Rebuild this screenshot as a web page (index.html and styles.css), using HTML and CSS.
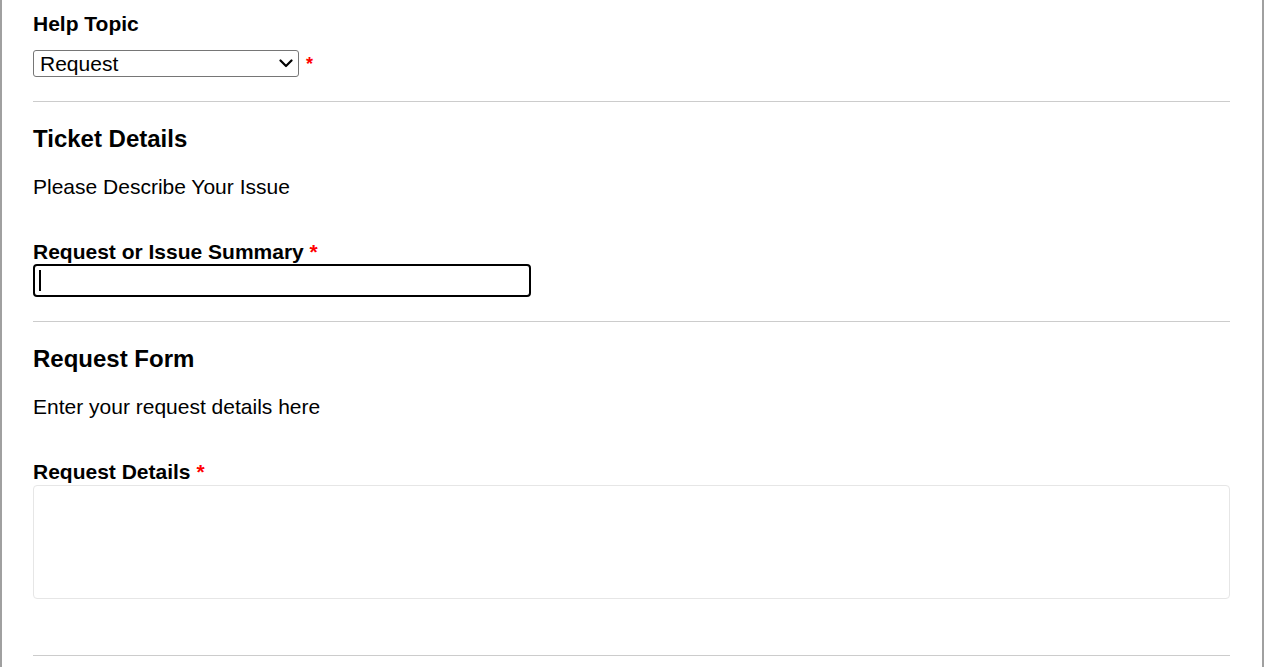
FILE: index.html
```html
<!DOCTYPE html>
<html lang="en">
<head>
<meta charset="utf-8">
<title>Open a New Ticket</title>
<link rel="stylesheet" href="styles.css">
</head>
<body>
<div class="page">
  <div class="field topic">
    <label class="label" for="topic">Help Topic</label>
    <div class="select-row">
      <div class="select-wrap">
        <select id="topic" class="select">
          <option>Request</option>
        </select>
        <svg class="chevron" width="14" height="9" viewBox="0 0 14 9" aria-hidden="true">
          <path d="M1.5 1.5 L7 7 L12.5 1.5" fill="none" stroke="#000" stroke-width="2.2" stroke-linecap="round" stroke-linejoin="round"/>
        </svg>
      </div>
      <span class="req">*</span>
    </div>
  </div>
  <hr class="rule">
  <section class="section">
    <h2 class="heading">Ticket Details</h2>
    <p class="desc">Please Describe Your Issue</p>
    <div class="field">
      <label class="label" for="summary">Request or Issue Summary <span class="req">*</span></label>
      <div class="input-wrap">
        <input id="summary" class="input" type="text">
        <span class="caret"></span>
      </div>
    </div>
  </section>
  <hr class="rule">
  <section class="section">
    <h2 class="heading">Request Form</h2>
    <p class="desc">Enter your request details here</p>
    <div class="field">
      <label class="label" for="details">Request Details <span class="req">*</span></label>
      <textarea id="details" class="textarea"></textarea>
    </div>
  </section>
  <hr class="rule last">
</div>
</body>
</html>
```
FILE: styles.css
```css
html, body {
  margin: 0;
  padding: 0;
  background: #ffffff;
}
body {
  font-family: "Liberation Sans", Arial, sans-serif;
  color: #000;
}
.page {
  box-sizing: border-box;
  width: 1264px;
  min-height: 667px;
  border-left: 2px solid #a0a0a0;
  border-right: 2px solid #a0a0a0;
  padding: 12px 32px 0 31px;
}
.field {
  display: flex;
  flex-direction: column;
  align-items: flex-start;
}
.label {
  font-weight: bold;
  font-size: 21px;
  line-height: 24px;
}
.topic .label {
  margin-bottom: 14px;
}
.select-row {
  display: flex;
  align-items: flex-start;
  gap: 7px;
}
.select-wrap {
  position: relative;
  width: 266px;
  height: 27px;
}
.select {
  -webkit-appearance: none;
  appearance: none;
  box-sizing: border-box;
  width: 266px;
  height: 27px;
  font-family: "Liberation Sans", Arial, sans-serif;
  font-size: 21px;
  line-height: 25px;
  color: #000;
  background: #fff;
  border: 1px solid #767676;
  border-radius: 3px;
  padding: 0 0 0 6px;
  margin: 0;
}
.chevron {
  position: absolute;
  left: 246px;
  top: 9px;
}
.req {
  color: #ff0000;
  font-weight: bold;
  font-size: 21px;
}
.select-row .req {
  font-size: 18px;
  line-height: 22px;
  padding-top: 3px;
}
.rule {
  border: 0;
  border-top: 1px solid #cccccc;
  margin: 24px 0 0 0;
  height: 0;
}
.section {
  display: flex;
  flex-direction: column;
}
.heading {
  margin: 23px 0 0 0;
  font-size: 24px;
  line-height: 28px;
  font-weight: bold;
}
.desc {
  margin: 22px 0 0 0;
  font-size: 21px;
  line-height: 24px;
}
.section .field {
  margin-top: 41px;
}
.input-wrap {
  position: relative;
  width: 498px;
  height: 33px;
}
.input {
  box-sizing: border-box;
  width: 498px;
  height: 33px;
  margin: 0;
  border: 2px solid #000;
  border-radius: 4px;
  outline: none;
  background: #fff;
  font-size: 18px;
}
.caret {
  position: absolute;
  left: 6px;
  top: 6px;
  width: 2px;
  height: 21px;
  background: #000;
}
.textarea {
  box-sizing: border-box;
  width: 100%;
  height: 114px;
  margin: 1px 0 0 0;
  border: 1px solid #e6e6e6;
  border-radius: 4px;
  resize: none;
  outline: none;
  background: #fff;
  display: block;
}
.rule.last {
  margin-top: 56px;
}
```
